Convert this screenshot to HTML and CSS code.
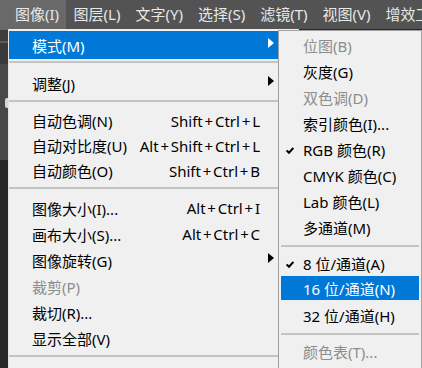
FILE: index.html
```html
<!DOCTYPE html>
<html lang="zh-CN">
<head>
<meta charset="utf-8">
<link rel="stylesheet" href="styles.css">
</head>
<body>
<div class="screen">
  <nav class="menubar">
    <span class="mb-item active">图像(I)</span>
    <span class="mb-item">图层(L)</span>
    <span class="mb-item">文字(Y)</span>
    <span class="mb-item">选择(S)</span>
    <span class="mb-item">滤镜(T)</span>
    <span class="mb-item">视图(V)</span>
    <span class="mb-item">增效工具</span>
  </nav>
  <div class="workspace">
    <div class="band b1"></div>
    <div class="band b2"></div>
    <div class="band b3"></div>
    <div class="band b4"></div>
    <div class="band b5"><span class="blob"></span></div>
    <div class="band b6"></div>
  </div>

  <div class="menu main">
    <div class="item first selected"><span class="label">模式(M)</span><span class="key"></span><span class="arr"><svg width="6" height="10" viewBox="0 0 6 10"><polygon points="0,0 6,5 0,10" fill="#fff"/></svg></span></div>
    <div class="sep s-top"></div>
    <div class="item"><span class="label">调整(J)</span><span class="key"></span><span class="arr"><svg width="6" height="10" viewBox="0 0 6 10"><polygon points="0,0 6,5 0,10" fill="#000"/></svg></span></div>
    <div class="sep"></div>
    <div class="group compact">
      <div class="item"><span class="label">自动色调(N)</span><span class="key">Shift<i>+</i>Ctrl<i>+</i>L</span><span class="arr"></span></div>
      <div class="item"><span class="label">自动对比度(U)</span><span class="key">Alt<i>+</i>Shift<i>+</i>Ctrl<i>+</i>L</span><span class="arr"></span></div>
      <div class="item"><span class="label">自动颜色(O)</span><span class="key">Shift<i>+</i>Ctrl<i>+</i>B</span><span class="arr"></span></div>
    </div>
    <div class="sep"></div>
    <div class="item"><span class="label">图像大小(I)...</span><span class="key">Alt<i>+</i>Ctrl<i>+</i>I</span><span class="arr"></span></div>
    <div class="item"><span class="label">画布大小(S)...</span><span class="key">Alt<i>+</i>Ctrl<i>+</i>C</span><span class="arr"></span></div>
    <div class="item"><span class="label">图像旋转(G)</span><span class="key"></span><span class="arr"><svg width="6" height="10" viewBox="0 0 6 10"><polygon points="0,0 6,5 0,10" fill="#000"/></svg></span></div>
    <div class="item disabled"><span class="label">裁剪(P)</span><span class="key"></span><span class="arr"></span></div>
    <div class="item"><span class="label">裁切(R)...</span><span class="key"></span><span class="arr"></span></div>
    <div class="item"><span class="label">显示全部(V)</span><span class="key"></span><span class="arr"></span></div>
    <div class="sep s-bottom"></div>
    <div class="item"><span class="label">复制(D)...</span><span class="key"></span><span class="arr"></span></div>
  </div>

  <div class="menu sub">
    <div class="sitem disabled"><span class="chk"></span><span class="label">位图(B)</span></div>
    <div class="sitem"><span class="chk"></span><span class="label">灰度(G)</span></div>
    <div class="sitem disabled"><span class="chk"></span><span class="label">双色调(D)</span></div>
    <div class="sitem"><span class="chk"></span><span class="label">索引颜色(I)...</span></div>
    <div class="sitem"><span class="chk"><svg width="8" height="7" viewBox="0 0 8 7"><path d="M0.6 3.4 L3 5.8 L7.4 1" fill="none" stroke="#000" stroke-width="2"/></svg></span><span class="label">RGB 颜色(R)</span></div>
    <div class="sitem"><span class="chk"></span><span class="label">CMYK 颜色(C)</span></div>
    <div class="sitem"><span class="chk"></span><span class="label">Lab 颜色(L)</span></div>
    <div class="sitem"><span class="chk"></span><span class="label">多通道(M)</span></div>
    <div class="ssep"></div>
    <div class="sitem"><span class="chk"><svg width="8" height="7" viewBox="0 0 8 7"><path d="M0.6 3.4 L3 5.8 L7.4 1" fill="none" stroke="#000" stroke-width="2"/></svg></span><span class="label">8 位/通道(A)</span></div>
    <div class="sitem selected"><span class="chk"></span><span class="label">16 位/通道(N)</span></div>
    <div class="sitem"><span class="chk"></span><span class="label">32 位/通道(H)</span></div>
    <div class="ssep"></div>
    <div class="sitem disabled"><span class="chk"></span><span class="label">颜色表(T)...</span></div>
  </div>
</div>
</body>
</html>
```

FILE: styles.css
```css
* {
  box-sizing: border-box;
  margin: 0;
  padding: 0;
}

html, body {
  width: 422px;
  height: 368px;
  overflow: hidden;
}

body {
  background: #282828;
  font-family: "Noto Sans", "Noto Sans CJK SC", sans-serif;
  font-size: 15px;
  color: #000;
}

.screen {
  position: relative;
  width: 422px;
  height: 368px;
  overflow: hidden;
}

/* ---------- menu bar ---------- */
.menubar {
  display: flex;
  height: 29px;
  background: #535353;
  color: #e8e8e8;
  line-height: 28px;
  white-space: nowrap;
}

.mb-item {
  padding: 0 7.5px;
}

.mb-item.active {
  background: #696969;
  padding-left: 15px;
  padding-right: 7px;
}

/* ---------- workspace strip ---------- */
.workspace {
  display: flex;
  flex-direction: column;
  width: 8px;
}

.band { width: 100%; }
.b1 { height: 1px; background: #6a6a6a; }
.b2 { height: 11px; background: #3c3c3c; }
.b3 { height: 2px; background: #5c5c5c; }
.b4 { height: 21px; background: #3a3a3a; }
.b5 { height: 96px; background: #484848; position: relative; }
.b6 { height: 210px; background: #282828; }

.blob {
  position: absolute;
  left: 5px;
  top: 34px;
  width: 4px;
  height: 10px;
  border-radius: 2px 0 0 2px;
  background: #d8d8d8;
}

/* ---------- dropdown menus ---------- */
.menu {
  position: absolute;
  background: #f0f0f0;
  white-space: nowrap;
}

.main {
  left: 8px;
  top: 29px;
  width: 291px;
  padding-top: 2px;
  border-left: 1px solid #e4e4e4;
}

.item {
  display: flex;
  align-items: center;
  height: 26px;
  padding-left: 23px;
}

.item.first {
  height: 28px;
}

.compact .item {
  height: 25px;
}

.item .label {
  flex: 1;
}

.item .key {
  text-align: right;
}

.item .key i {
  font-style: normal;
  padding: 0 1.8px;
}

.item .arr {
  width: 39px;
  padding-left: 8px;
  display: flex;
  align-items: center;
  margin-bottom: 4px;
}

.item.selected {
  background: #0078d7;
  color: #fff;
}

.disabled {
  color: #8d8d8d;
}

.sep {
  height: 12px;
  padding-top: 4px;
}

.sep::before {
  content: "";
  display: block;
  height: 2px;
  background: #c4c4c4;
}

.sep.s-top {
  height: 11px;
  padding-top: 2px;
}

.sep.s-bottom {
  height: 14px;
}

/* ---------- sub menu ---------- */
.sub {
  left: 278px;
  top: 30px;
  width: 144px;
  height: 345px;
  border: 1px solid #a0a0a0;
  padding-top: 1px;
}

.sitem {
  display: flex;
  align-items: center;
  height: 26px;
  margin: 0 2px;
  border-top: 1px solid transparent;
  border-bottom: 1px solid transparent;
  background-clip: padding-box;
}

.sitem .chk {
  width: 22px;
  padding-left: 5px;
  display: flex;
  align-items: center;
  padding-top: 2px;
}

.sitem.selected {
  background-color: #0078d7;
  color: #fff;
  border-top-width: 0;
  border-bottom-width: 2px;
}

.ssep {
  height: 10px;
  padding-top: 5px;
  margin: 0 2px;
}

.ssep::before {
  content: "";
  display: block;
  height: 2px;
  background: #c4c4c4;
}
```
